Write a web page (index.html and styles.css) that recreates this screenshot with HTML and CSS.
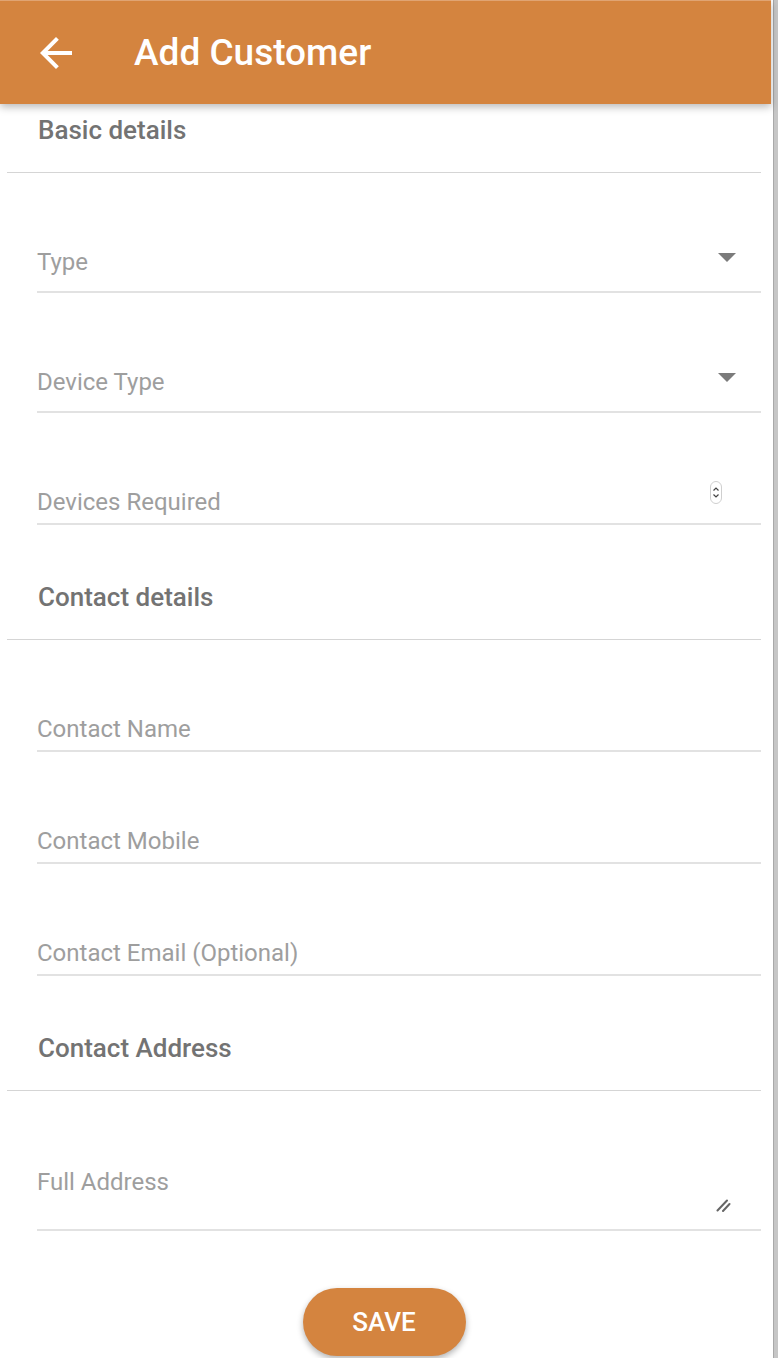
FILE: index.html
```html
<!DOCTYPE html>
<html lang="en">
<head>
<meta charset="utf-8">
<title>Add Customer</title>
<link rel="stylesheet" href="styles.css">
</head>
<body>
<div class="screen">
  <div class="app">
    <header class="appbar">
      <svg class="back" viewBox="0 0 24 24" width="48" height="48" aria-hidden="true"><path d="M20 11H7.83l5.59-5.59L12 4l-8 8 8 8 1.41-1.41L7.83 13H20v-2z" fill="#fff"/></svg>
      <h1 class="title">Add Customer</h1>
    </header>
    <main class="form">
      <div class="section-title first">Basic details</div>
      <div class="field select">
        <span class="label">Type</span>
        <svg class="caret" viewBox="0 0 18 9" width="18" height="9"><path d="M0 0h18L9 9z" fill="#7b7b7b"/></svg>
      </div>
      <div class="field select">
        <span class="label">Device Type</span>
        <svg class="caret" viewBox="0 0 18 9" width="18" height="9"><path d="M0 0h18L9 9z" fill="#7b7b7b"/></svg>
      </div>
      <div class="field number">
        <span class="label">Devices Required</span>
        <svg class="spin" viewBox="0 0 12 23" width="12" height="23"><rect x="0.5" y="0.5" width="11" height="22" rx="5.5" fill="#fff" stroke="#cfcfcf"/><path d="M3.5 9.5L6 7l2.5 2.5M3.5 13.5L6 16l2.5-2.5" fill="none" stroke="#444" stroke-width="1.2"/></svg>
      </div>

      <div class="section-title">Contact details</div>
      <div class="field text"><span class="label">Contact Name</span></div>
      <div class="field text"><span class="label">Contact Mobile</span></div>
      <div class="field text"><span class="label">Contact Email (Optional)</span></div>

      <div class="section-title">Contact Address</div>
      <div class="field area">
        <span class="label">Full Address</span>
        <svg class="grip" viewBox="0 0 15 13" width="15" height="13"><path d="M1.5 11.5L11 1.5M7 12L13.5 5" stroke="#666" stroke-width="2" stroke-linecap="round" fill="none"/></svg>
      </div>

      <div class="actions">
        <button class="save" type="button">SAVE</button>
      </div>
    </main>
  </div>
  <div class="scrollbar"></div>
</div>
</body>
</html>
```
FILE: styles.css
```css
* { box-sizing: border-box; }
html, body { margin: 0; padding: 0; background: #fff; }
body {
  font-family: Roboto, "Liberation Sans", Arial, sans-serif;
  width: 778px;
  height: 1358px;
  overflow: hidden;
}
.screen {
  display: flex;
  height: 1358px;
}
.app {
  width: 771px;
  flex: none;
}
.scrollbar {
  width: 5px;
  margin-left: 2px;
  background: #c6c6c6;
  border-left: 1px solid #a9a9a9;
  flex: none;
}
.appbar {
  height: 104px;
  background: #d4843f;
  border-top: 1px solid #e0a473;
  display: flex;
  align-items: center;
  padding-left: 32px;
  box-shadow: 0 3px 8px rgba(0, 0, 0, 0.28);
  position: relative;
  z-index: 1;
}
.back { display: block; flex: none; }
.title {
  margin: 0 0 0 54px;
  color: #fff;
  font-size: 37px;
  font-weight: 500;
  line-height: 44px;
}
.form {
  padding: 0 10px 0 7px;
}
.section-title {
  color: #737373;
  font-size: 26px;
  font-weight: 500;
  line-height: 32px;
  padding: 56px 0 26px 31px;
  border-bottom: 1px solid #d5d5d5;
}
.section-title.first {
  padding-top: 10px;
  padding-bottom: 26px;
}
.field {
  margin-left: 30px;
  border-bottom: 2px solid #e2e2e2;
  display: flex;
  align-items: flex-end;
  position: relative;
}
.label {
  color: #9e9e9e;
  font-size: 24px;
  line-height: 30px;
  flex: 1;
}
.field.select { height: 120px; padding-bottom: 14px; }
.field.number { height: 112px; padding-bottom: 6px; }
.field.text { height: 112px; padding-bottom: 6px; }
.field.area {
  height: 140px;
  align-items: flex-start;
  padding-top: 76px;
}
.caret {
  flex: none;
  align-self: flex-start;
  margin: 80px 25px 0 0;
}
.spin {
  flex: none;
  margin: 0 39px 13px 0;
}
.grip {
  position: absolute;
  right: 30px;
  bottom: 17px;
}
.actions {
  display: flex;
  justify-content: center;
  padding-top: 57px;
}
.save {
  width: 163px;
  height: 68px;
  border: none;
  border-radius: 34px;
  background: #d4843f;
  color: #fff;
  font-family: Roboto, "Liberation Sans", Arial, sans-serif;
  font-size: 26px;
  font-weight: 500;
  box-shadow: 0 3px 6px rgba(0, 0, 0, 0.3);
  padding: 0;
}
```
